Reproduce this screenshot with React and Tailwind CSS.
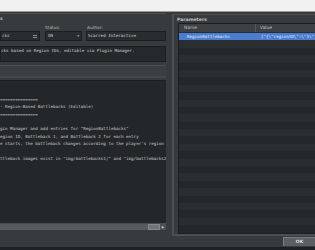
export default function App() {
  const help = [
    "",
    "",
    "===============",
    "- Region-Based Battlebacks (Editable)",
    "===============",
    "",
    'gin Manager and add entries for "RegionBattlebacks"',
    "egion ID, Battleback 1, and Battleback 2 for each entry",
    "e starts, the battleback changes according to the player's region",
    "",
    'ttleback images exist in "img/battlebacks1/" and "img/battlebacks2/"',
  ];
  const rows = Array.from({ length: 26 }, (_, i) => i);
  return (
    <div className="w-[315px] h-[250px] overflow-hidden bg-[#383b3e] flex flex-col font-['DejaVu_Sans',sans-serif] text-[#c9c9c9]">
      <div className="h-[12px] bg-[#f1f1f1] border-b border-[#9a9a9a] shrink-0" />
      <div className="h-[221px] flex flex-row shrink-0">
        {/* left column */}
        <div className="w-[166px] flex flex-col shrink-0">
          <div className="h-[2px] border-b border-[#4b4e51]" />
          <div className="h-[10px] pt-[2px] text-[4.5px] leading-[6px] font-bold text-[#bdbdbd]">s</div>
          <div className="h-[7px] flex text-[4.3px] leading-[7px] text-[#bdbdbd]">
            <div className="w-[45px]" />
            <div className="w-[42px]">Status:</div>
            <div>Author:</div>
          </div>
          <div className="h-[10px] flex font-['DejaVu_Sans_Mono',monospace] text-[4.2px] leading-[8px]">
            <div className="w-[40px] bg-[#2a2d30] border border-[#1c1e20] flex items-center justify-between pr-[2px]">
              <span className="pl-[1px]">cks</span>
              <span className="flex flex-col gap-[1px]">
                <span className="block w-[4px] h-[1px] bg-[#8a8d90]" />
                <span className="block w-[4px] h-[1px] bg-[#8a8d90]" />
              </span>
            </div>
            <div className="w-[5px]" />
            <div className="w-[37px] bg-[#2a2d30] border border-[#1c1e20] flex items-center justify-between px-[2px]">
              <span>ON</span>
              <span className="text-[3px] text-[#bbbbbb]">▼</span>
            </div>
            <div className="w-[4px]" />
            <div className="flex-1 bg-[#2a2d30] border border-[#1c1e20] flex items-center pl-[1px] text-[#d6d6d6]">
              Scarred Interactive
            </div>
          </div>
          <div className="h-[5px]" />
          <div className="h-[16px] bg-[#26292c] border border-[#1c1e20] font-['DejaVu_Sans_Mono',monospace] text-[4.2px] leading-[6px] pt-[1px] whitespace-pre overflow-hidden text-[#cfcfcf]">
            cks based on Region IDs, editable via Plugin Manager.
          </div>
          <div className="h-[3px]" />
          <div className="h-[1px] bg-[#4e5154]" />
          <div className="h-[10px] bg-[#3c3f42]" />
          <div className="h-[2px] bg-[#45484b]" />
          <div className="h-[2px]" />
          <div className="h-[143px] bg-[#24272a] border-t border-[#1c1e20] font-['DejaVu_Sans_Mono',monospace] text-[4.2px] leading-[7.4px] whitespace-pre overflow-hidden text-[#cacaca]">
            {help.map((l, i) => (
              <div key={i} className="h-[7.4px]">{l}</div>
            ))}
          </div>
          <div className="h-[7px] flex bg-[#585b5e] border-t border-[#4a4d50]">
            <div className="flex-1" />
            <div className="w-[12px] bg-[#727578] border border-[#85888b]" />
            <div className="w-[6px] bg-[#4f5255] flex items-center justify-center text-[3px] text-[#d0d0d0]">▶</div>
          </div>
        </div>
        {/* right group */}
        <div className="flex-1 flex flex-col pl-[6px] pt-[2px]">
          <div className="flex-1 flex flex-col border-l-2 border-t border-b-2 border-[#4d5053] pl-[3px]">
            <div className="h-[8px] pt-[2px] text-[4.6px] leading-[5px] font-bold text-[#c4c4c4]">Parameters</div>
            <div className="flex-1 flex flex-col bg-[#25282b] border border-[#1c1e20] overflow-hidden ml-[1px]">
              <div className="h-[9px] flex bg-[#3e4144] border-b border-[#2a2c2e] text-[4.4px] leading-[8px] text-[#c0c0c0] shrink-0">
                <div className="w-[77px] pl-[5px] border-r border-[#55585b]">Name</div>
                <div className="pl-[4px]">Value</div>
              </div>
              <div className="h-[7.4px] flex bg-[#4a7cd0] text-[#e8eefc] font-['DejaVu_Sans_Mono',monospace] text-[4.2px] leading-[7.4px] whitespace-pre overflow-hidden shrink-0">
                <div className="w-[77px] pl-[8px]">RegionBattlebacks</div>
                <div className="pl-[5px]">{'["{\\"regionID\\":\\"1\\",\\"battleback1\\"'}</div>
              </div>
              {rows.map((i) => (
                <div key={i} className={i % 2 === 0 ? "h-[7.4px] bg-[#2b2e31] shrink-0" : "h-[7.4px] bg-[#25282b] shrink-0"} />
              ))}
            </div>
          </div>
        </div>
      </div>
      <div className="flex-1 flex flex-col">
        <div className="flex-1 flex justify-end pt-[4px]">
          <div className="w-[32px] h-[9px] bg-[#5d6063] border-t border-l border-[#7a7d80] text-[4.5px] leading-[8px] text-center text-[#e2e2e2] font-bold">OK</div>
        </div>
        <div className="h-[3px] bg-[#1f2225]" />
      </div>
    </div>
  );
}
